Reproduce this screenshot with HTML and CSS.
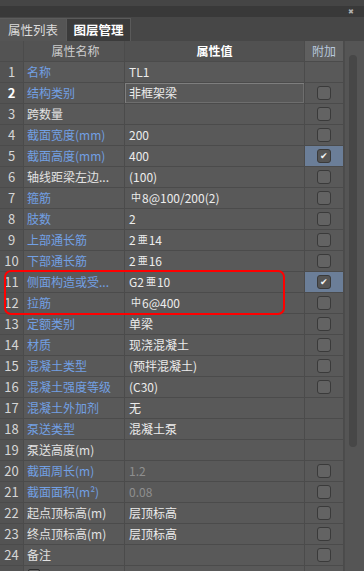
FILE: index.html
```html
<!DOCTYPE html>
<html lang="zh-CN">
<head>
    <meta charset="UTF-8">
    <title>属性列表</title>
    <link rel="stylesheet" href="styles.css">
</head>
<body>
<div class="panel">
    <div class="titlebar"><span class="close">&#x2716;</span></div>
    <div class="tabs">
        <div class="tab active">属性列表</div>
        <div class="tab">图层管理</div>
    </div>
    <div class="content">
        <div class="grid">
            <div class="row head">
                <div class="idx"></div>
                <div class="name">属性名称</div>
                <div class="val">属性值</div>
                <div class="extra">附加</div>
            </div>
            <div id="rows"></div>
            <!-- highlight around rows 11-12 -->
            <div class="mark"></div>
        </div>
        <div class="scrollbar"><div class="thumb"></div></div>
    </div>
</div>

<script>
    // name, value, blue label?, checkbox: 0 none / 1 empty / 2 checked, grey value?
    const props = [
        ["名称", "TL1", 1, 0],
        ["结构类别", "非框架梁", 1, 1],
        ["跨数量", "", 0, 1],
        ["截面宽度(mm)", "200", 1, 1],
        ["截面高度(mm)", "400", 1, 2],
        ["轴线距梁左边...", "(100)", 0, 1],
        ["箍筋", "<span class='sym'>中</span>8@100/200(2)", 1, 1],
        ["肢数", "2", 1, 1],
        ["上部通长筋", "2<span class='sym'>亜</span>14", 1, 1],
        ["下部通长筋", "2<span class='sym'>亜</span>16", 1, 1],
        ["侧面构造或受...", "G2<span class='sym'>亜</span>10", 1, 2],
        ["拉筋", "<span class='sym'>中</span>6@400", 1, 1],
        ["定额类别", "单梁", 1, 1],
        ["材质", "现浇混凝土", 1, 1],
        ["混凝土类型", "(预拌混凝土)", 1, 1],
        ["混凝土强度等级", "(C30)", 1, 1],
        ["混凝土外加剂", "无", 1, 0],
        ["泵送类型", "混凝土泵", 1, 0],
        ["泵送高度(m)", "", 0, 0],
        ["截面周长(m)", "1.2", 1, 1, 1],
        ["截面面积(m²)", "0.08", 1, 1, 1],
        ["起点顶标高(m)", "层顶标高", 0, 1],
        ["终点顶标高(m)", "层顶标高", 0, 1],
        ["备注", "", 0, 1]
    ];

    const rows = document.getElementById('rows');
    props.forEach((p, i) => {
        const div = document.createElement('div');
        div.classList.add('row');
        if (i === 1) div.classList.add('current');
        let box = '';
        if (p[3] === 1) box = '<span class="check"></span>';
        if (p[3] === 2) box = '<span class="check on">&#x2714;</span>';
        div.innerHTML = `
            <div class="idx">${i + 1}</div>
            <div class="name${p[2] ? ' blue' : ''}">${p[0]}</div>
            <div class="val${p[4] ? ' grey' : ''}">${p[1]}</div>
            <div class="extra${p[3] === 2 ? ' picked' : ''}">${box}</div>
        `;
        rows.appendChild(div);
    });

    // partly visible group row at the bottom
    const last = document.createElement('div');
    last.classList.add('row');
    last.innerHTML = '<div class="idx"></div><div class="name"><span class="expander"></span></div><div class="val"></div><div class="extra"></div>';
    rows.appendChild(last);
</script>
</body>
</html>
```

FILE: styles.css
```css
body {
    margin: 0;
    background-color: #595959;
    font-family: "Noto Sans CJK SC", "Noto Sans", sans-serif;
    font-size: 12px;
}

.panel {
    width: 364px;
    height: 571px;
    overflow: hidden;
    background: #595959;
}

.titlebar {
    height: 11px;
    border-top: 6px solid #454545;
    background: #393939;
    display: flex;
    justify-content: flex-end;
    align-items: center;
    padding-right: 10px;
}

.close {
    color: #b0b0b0;
    font-size: 7px;
    line-height: 7px;
}

.tabs {
    height: 24px;
    background: #474747;
    display: flex;
    align-items: flex-end;
}

.tab {
    height: 23px;
    line-height: 22px;
    box-sizing: border-box;
    text-align: center;
    font-size: 12.5px;
}

.tab.active {
    width: 66px;
    background: #555555;
    color: #dcdcdc;
    border-top: 1px solid #5c5c5c;
}

.tab:not(.active) {
    width: 65px;
    background: #3b3b3b;
    color: #ffffff;
    font-weight: bold;
    border: 1px solid #5a5a5a;
    border-bottom: none;
}

.content {
    display: flex;
}

.grid {
    position: relative;
    width: 344px;
}

.row {
    display: grid;
    grid-template-columns: 24px 101px 180px 39px;
    height: 21px;
}

.row > div {
    box-sizing: border-box;
    border-right: 1px solid #4b4b4b;
    border-bottom: 1px solid #4b4b4b;
    line-height: 20px;
    white-space: nowrap;
    overflow: hidden;
}

.idx {
    background: #535353;
    color: #d6d6d6;
    text-align: center;
    font-size: 13px;
}

.name {
    color: #e2e2e2;
    padding-left: 3px;
}

.name.blue {
    color: #72a0e4;
}

.val {
    color: #ececec;
    padding-left: 4px;
}

.val.grey {
    color: #8f8f8f;
}

.sym {
    display: inline-block;
    font-size: 10px;
    margin: 0 1px 0 2px;
    vertical-align: 2px;
    line-height: 10px;
}

.extra {
    display: flex;
    align-items: center;
    justify-content: center;
}

.extra.picked {
    background: #6b7e98;
}

.head > div {
    background: #535353;
    text-align: center;
    color: #cdcdcd;
}

.head .val {
    background: #515151;
    color: #ffffff;
    font-weight: bold;
    padding-left: 0;
}

.head .extra {
    background: #5f5f5f;
    color: #b8c8dc;
}

.current .idx {
    color: #ffffff;
    font-weight: bold;
}

.current .val {
    box-shadow: inset 1px 1px 0 #7e7e7e, inset -1px -1px 0 #6e6e6e;
}

.check {
    width: 12px;
    height: 12px;
    border: 1px solid #3a3a3a;
    border-radius: 3px;
    background: #636363;
    color: #f4f4f4;
    font-size: 9px;
    line-height: 12px;
    text-align: center;
}

.check.on {
    background: #555555;
}

.expander {
    display: inline-block;
    width: 10px;
    height: 10px;
    margin: 3px 0 0 1px;
    border: 1px solid #2e2e2e;
    border-radius: 2px;
    background: #666666;
    vertical-align: top;
}

.mark {
    position: absolute;
    left: 4px;
    top: 229px;
    width: 277px;
    height: 41px;
    border: 2px solid #ff0000;
    border-radius: 7px;
}

.scrollbar {
    width: 20px;
    height: 530px;
    box-sizing: border-box;
    border-left: 1px solid #4c4c4c;
    background: #555555;
    padding: 14px 0 0 4px;
}

.thumb {
    width: 8px;
    height: 392px;
    border-radius: 4px;
    background: #474747;
}
```
